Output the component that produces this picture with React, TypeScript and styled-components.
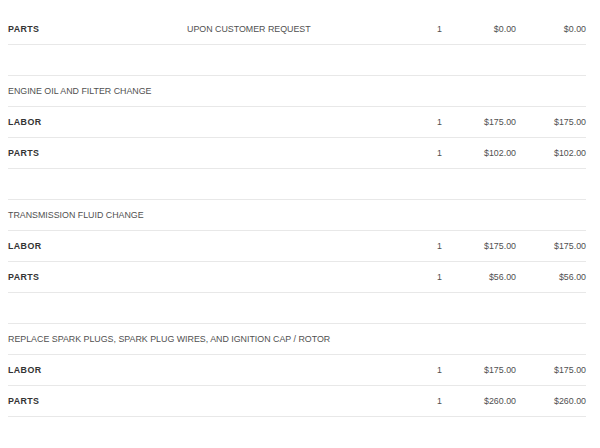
import React from "react";
import styled, { createGlobalStyle } from "styled-components";

const GlobalStyle = createGlobalStyle`
  html, body {
    margin: 0;
    padding: 0;
    background: #ffffff;
  }
  body {
    font-family: "Liberation Sans", Arial, sans-serif;
  }
`;

const Page = styled.div`
  padding: 14px 14px 0 8px;
  width: 578px;
`;

const Row = styled.div`
  display: flex;
  align-items: center;
  height: 30px;
  border-bottom: 1px solid #e8e8e8;
  font-size: 8.85px;
  color: #505050;
`;

const Name = styled.div<{ $bold?: boolean }>`
  width: 179px;
  font-weight: ${(p) => (p.$bold ? 700 : 400)};
  color: ${(p) => (p.$bold ? "#333" : "#505050")};
  letter-spacing: ${(p) => (p.$bold ? "0.4px" : "0")};
`;

const Title = styled.div`
  flex: 1;
  color: #505050;
`;

const Desc = styled.div`
  flex: 1;
`;

const Qty = styled.div`
  width: 30px;
  text-align: right;
  padding-right: 1px;
`;

const Money = styled.div<{ $w: number }>`
  width: ${(p) => p.$w}px;
  text-align: right;
`;

type Line = { kind: string; note?: string; qty: number; price: string };
type Service = { title: string; lines: Line[] };

const services: Service[] = [
  {
    title: "ENGINE OIL AND FILTER CHANGE",
    lines: [
      { kind: "LABOR", qty: 1, price: "$175.00" },
      { kind: "PARTS", qty: 1, price: "$102.00" },
    ],
  },
  {
    title: "TRANSMISSION FLUID CHANGE",
    lines: [
      { kind: "LABOR", qty: 1, price: "$175.00" },
      { kind: "PARTS", qty: 1, price: "$56.00" },
    ],
  },
  {
    title: "REPLACE SPARK PLUGS, SPARK PLUG WIRES, AND IGNITION CAP / ROTOR",
    lines: [
      { kind: "LABOR", qty: 1, price: "$175.00" },
      { kind: "PARTS", qty: 1, price: "$260.00" },
    ],
  },
];

const ItemRow = ({ line }: { line: Line }) => (
  <Row>
    <Name $bold>{line.kind}</Name>
    <Desc>{line.note}</Desc>
    <Qty>{line.qty}</Qty>
    <Money $w={73}>{line.price}</Money>
    <Money $w={70}>{line.price}</Money>
  </Row>
);

export default function App() {
  return (
    <>
      <GlobalStyle />
      <Page>
        <ItemRow
          line={{ kind: "PARTS", note: "UPON CUSTOMER REQUEST", qty: 1, price: "$0.00" }}
        />
        {services.map((s) => (
          <React.Fragment key={s.title}>
            <Row />
            <Row>
              <Title>{s.title}</Title>
            </Row>
            {s.lines.map((l) => (
              <ItemRow key={l.kind} line={l} />
            ))}
          </React.Fragment>
        ))}
      </Page>
    </>
  );
}
